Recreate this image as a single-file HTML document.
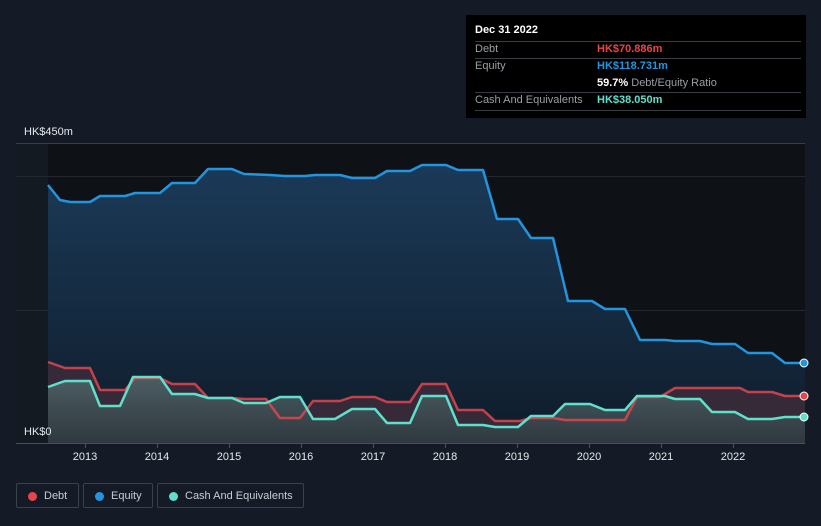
<!DOCTYPE html>
<html><head><meta charset="utf-8"><style>
body{margin:0;width:821px;height:526px;background:#151b26;font-family:"Liberation Sans",sans-serif;overflow:hidden;position:relative}
.tt{position:absolute;left:466px;top:15px;width:340px;height:103px;background:#000;color:#fff;font-size:11px}
.tt .r{position:absolute;left:9px;width:326px;border-top:1px solid #3a3d44}
.lab{position:absolute;left:9px;color:#9a9ea6}
.val{position:absolute;left:131px;font-weight:bold}
.lg{position:absolute;top:483px;height:25px;border:1px solid #3b414c;border-radius:2px;color:#c9ccd2;font-size:11px;line-height:25px;box-sizing:border-box}
.lg i{position:absolute;top:8px;left:11px;width:9px;height:9px;border-radius:50%}
.lg span{position:absolute;left:27px}
</style></head><body>
<svg width="821" height="526" style="position:absolute;left:0;top:0">
<defs>
<linearGradient id="eq" x1="0" y1="0" x2="0" y2="1"><stop offset="0" stop-color="#1b3a58"/><stop offset="1" stop-color="#0f1c2a"/></linearGradient>
<linearGradient id="ca" x1="0" y1="0" x2="0" y2="1"><stop offset="0" stop-color="#4f6468"/><stop offset="1" stop-color="#2e3a40"/></linearGradient>
</defs>
<rect x="16" y="143" width="789" height="300" fill="#0e1116"/>
<rect x="16" y="143" width="32" height="300" fill="#141a22"/>
<line x1="16" y1="143.5" x2="805" y2="143.5" stroke="#3a3f47"/>
<line x1="16" y1="176.5" x2="805" y2="176.5" stroke="#23272e"/>
<line x1="16" y1="310.5" x2="805" y2="310.5" stroke="#23272e"/>
<polygon fill="url(#eq)" points="48,185 60,200 70,202 90,202 100,196 125,196 135,193 160,193 172,183 195,183 208,169 232,169 244,174 270,175 285,176 305,176 315,175 340,175 352,178 375,178 387,171 410,171 422,165 446,165 458,170 483,170 497,219 518,219 531,238 553,238 568,301 592,301 605,309 625,309 640,340 665,340 675,341 700,341 712,344 735,344 748,353 772,353 785,363 805,363 805,443 48,443"/>
<polygon fill="#3b2a3a" opacity="0.9" points="48,362 65,368 90,368 100,390 125,390 135,378 160,378 172,384 195,384 208,398 232,398 244,399 266,399 280,418 300,418 313,401 340,401 352,397 375,397 387,402 410,402 422,384 446,384 458,410 483,410 495,421 520,421 531,418 553,418 565,420 625,420 637,397 660,397 675,388 740,388 748,392 772,392 785,396 805,396 805,443 48,443"/>
<polygon fill="url(#ca)" opacity="0.9" points="48,387 65,381 90,381 100,406 120,406 133,377 160,377 172,394 195,394 208,398 232,398 244,403 266,403 280,397 300,397 313,419 335,419 352,409 375,409 387,423 410,423 422,396 446,396 458,425 483,425 495,427 518,427 531,416 553,416 565,404 590,404 605,410 625,410 637,396 665,396 675,399 700,399 712,412 735,412 748,419 772,419 785,417 805,417 805,443 48,443"/>
<g fill="none" stroke-width="2.5" stroke-linejoin="round">
<polyline stroke="#2394df" points="48,185 60,200 70,202 90,202 100,196 125,196 135,193 160,193 172,183 195,183 208,169 232,169 244,174 270,175 285,176 305,176 315,175 340,175 352,178 375,178 387,171 410,171 422,165 446,165 458,170 483,170 497,219 518,219 531,238 553,238 568,301 592,301 605,309 625,309 640,340 665,340 675,341 700,341 712,344 735,344 748,353 772,353 785,363 805,363"/>
<polyline stroke="#e0474f" stroke-opacity="0.85" points="48,362 65,368 90,368 100,390 125,390 135,378 160,378 172,384 195,384 208,398 232,398 244,399 266,399 280,418 300,418 313,401 340,401 352,397 375,397 387,402 410,402 422,384 446,384 458,410 483,410 495,421 520,421 531,418 553,418 565,420 625,420 637,397 660,397 675,388 740,388 748,392 772,392 785,396 805,396"/>
<polyline stroke="#5fe0cc" points="48,387 65,381 90,381 100,406 120,406 133,377 160,377 172,394 195,394 208,398 232,398 244,403 266,403 280,397 300,397 313,419 335,419 352,409 375,409 387,423 410,423 422,396 446,396 458,425 483,425 495,427 518,427 531,416 553,416 565,404 590,404 605,410 625,410 637,396 665,396 675,399 700,399 712,412 735,412 748,419 772,419 785,417 805,417"/>
</g>
<circle cx="804" cy="363" r="4" fill="#2394df" stroke="#fff" stroke-width="1"/>
<circle cx="804" cy="396" r="4" fill="#e0474f" stroke="#fff" stroke-width="1"/>
<circle cx="804" cy="417" r="4" fill="#5fe0cc" stroke="#fff" stroke-width="1"/>
<line x1="16" y1="443.5" x2="805" y2="443.5" stroke="#4a4f58"/>
<g stroke="#4a4f58"><line x1="85.5" y1="443" x2="85.5" y2="448"/><line x1="157.5" y1="443" x2="157.5" y2="448"/><line x1="229.5" y1="443" x2="229.5" y2="448"/><line x1="301.5" y1="443" x2="301.5" y2="448"/><line x1="373.5" y1="443" x2="373.5" y2="448"/><line x1="445.5" y1="443" x2="445.5" y2="448"/><line x1="517.5" y1="443" x2="517.5" y2="448"/><line x1="589.5" y1="443" x2="589.5" y2="448"/><line x1="661.5" y1="443" x2="661.5" y2="448"/><line x1="733.5" y1="443" x2="733.5" y2="448"/></g>
<g fill="#e6e8ec" font-size="11" text-anchor="middle" font-family="Liberation Sans,sans-serif">
<text x="85" y="460">2013</text><text x="157" y="460">2014</text><text x="229" y="460">2015</text><text x="301" y="460">2016</text><text x="373" y="460">2017</text><text x="445" y="460">2018</text><text x="517" y="460">2019</text><text x="589" y="460">2020</text><text x="661" y="460">2021</text><text x="733" y="460">2022</text>
</g>
<text x="24" y="135" fill="#e6e8ec" font-size="11">HK$450m</text>
<text x="24" y="435" fill="#e6e8ec" font-size="11">HK$0</text>
</svg>
<div class="tt">
<div style="position:absolute;left:9px;top:9px;font-weight:bold;font-size:11px">Dec 31 2022</div>
<div class="r" style="top:26px"></div>
<div class="lab" style="top:28px">Debt</div><div class="val" style="top:28px;color:#e8454b">HK$70.886m</div>
<div class="r" style="top:43px"></div>
<div class="lab" style="top:45px">Equity</div><div class="val" style="top:45px;color:#2394df">HK$118.731m</div>
<div class="val" style="top:62px;color:#fff">59.7% <span style="color:#9a9ea6;font-weight:normal">Debt/Equity Ratio</span></div>
<div class="r" style="top:77px"></div>
<div class="lab" style="top:79px">Cash And Equivalents</div><div class="val" style="top:79px;color:#5fe0cc">HK$38.050m</div>
<div class="r" style="top:95px"></div>
</div>
<div class="lg" style="left:16px;width:63px"><i style="background:#e8454b"></i><span>Debt</span></div>
<div class="lg" style="left:83px;width:70px"><i style="background:#2394df"></i><span>Equity</span></div>
<div class="lg" style="left:157px;width:147px"><i style="background:#5fe0cc"></i><span>Cash And Equivalents</span></div>
</body></html>
